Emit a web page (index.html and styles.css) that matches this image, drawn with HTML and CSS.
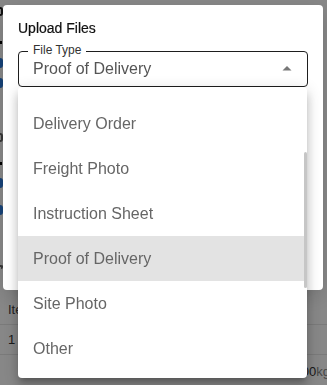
FILE: index.html
```html
<!DOCTYPE html>
<html lang="en">
<head>
    <meta charset="UTF-8">
    <meta name="viewport" content="width=device-width, initial-scale=1.0">
    <title>Upload Files</title>
    <link rel="stylesheet" href="styles.css">
</head>
<body>
    <!-- page behind the dialog -->
    <div class="page">
        <div class="side">
            <span class="side-bit s1"></span>
            <span class="side-dot d1"></span>
            <span class="side-check c1"></span>
            <span class="side-check c2"></span>
            <span class="side-bit s2"></span>
            <span class="side-dot d2"></span>
            <span class="side-check c3"></span>
            <span class="side-check c4"></span>
            <span class="side-bit s3"></span>
        </div>
        <div class="items-table">
            <div class="tr th">Item</div>
            <div class="tr">1 I</div>
            <div class="tr total">1,200<span class="unit">kg</span></div>
        </div>
    </div>

    <div class="backdrop"></div>

    <div class="dialog">
        <div class="dialog-title">Upload Files</div>
        <div class="field">
            <span class="field-label">File Type</span>
            <span class="field-value">Proof of Delivery</span>
            <svg class="field-arrow" width="24" height="24" viewBox="0 0 24 24">
                <path d="M7.5 13.5l4.5-4.5 4.5 4.5z" fill="#777"/>
            </svg>
        </div>
    </div>

    <div class="menu">
        <ul class="menu-list">
            <li class="menu-item">Delivery Order</li>
            <li class="menu-item">Freight Photo</li>
            <li class="menu-item">Instruction Sheet</li>
            <li class="menu-item selected">Proof of Delivery</li>
            <li class="menu-item">Site Photo</li>
            <li class="menu-item">Other</li>
        </ul>
        <div class="scroll-track">
            <div class="scroll-thumb"></div>
        </div>
    </div>
</body>
</html>
```

FILE: styles.css
```css
* {
    box-sizing: border-box;
}

html, body {
    margin: 0;
    height: 100%;
    overflow: hidden;
}

body {
    font-family: 'Liberation Sans', Arial, Helvetica, sans-serif;
    background: #fff;
    color: #222;
}

/* background page */
.page {
    display: flex;
    flex-direction: column;
    height: 385px;
}

.side {
    display: flex;
    flex-direction: column;
    height: 295px;
}

.side-bit {
    width: 3px;
    height: 9px;
    border: 2px solid #222;
    border-left: none;
    border-radius: 0 3px 3px 0;
}

.s1 { margin-top: 7px; }
.s2 { margin-top: 45px; border-color: #666; }
.s3 { margin-top: 50px; border-color: #666; height: 4px; border-bottom: none; }

.side-dot {
    width: 2px;
    height: 3px;
    background: #000;
}

.d1 { margin-top: 25px; }
.d2 { margin-top: 20px; }

.side-check {
    width: 3px;
    height: 10px;
    background: #2a7de1;
    border-radius: 0 3px 3px 0;
}

.c1 { margin-top: 14px; }
.c2 { margin-top: 10px; }
.c3 { margin-top: 13px; }
.c4 { margin-top: 17px; }

.items-table {
    display: flex;
    flex-direction: column;
    font-size: 13px;
    color: #333;
}

.tr {
    height: 30px;
    padding: 0 8px;
    display: flex;
    align-items: center;
    border-bottom: 1px solid #e6e6e6;
}

.th {
    color: #444;
}

.total {
    justify-content: flex-end;
    border-bottom: none;
    margin-right: -11px;
    padding-top: 2px;
}

.unit {
    color: #888;
}

.backdrop {
    position: fixed;
    inset: 0;
    background: rgba(0, 0, 0, 0.47);
}

/* dialog */
.dialog {
    position: fixed;
    left: 3px;
    top: 5px;
    width: 320px;
    height: 285px;
    background: #fff;
    border-radius: 4px;
    padding: 13px 15px 0 15px;
    box-shadow: 0 6px 20px rgba(0, 0, 0, 0.15);
}

.dialog-title {
    font-size: 14px;
    line-height: 20px;
    font-weight: 500;
    color: #111;
    margin-bottom: 13px;
    -webkit-text-stroke: 0.2px #111;
}

.field {
    position: relative;
    display: flex;
    align-items: center;
    width: 290px;
    height: 36px;
    border: 1px solid #1e1e1e;
    border-radius: 4px;
    padding: 0 8px 0 14px;
}

.field-label {
    position: absolute;
    left: 9px;
    top: -9px;
    padding: 0 5px;
    background: #fff;
    font-size: 12px;
    line-height: 14px;
    color: #333;
}

.field-value {
    font-size: 16px;
    line-height: 20px;
    color: #555;
}

.field-arrow {
    margin-left: auto;
}

/* dropdown menu */
.menu {
    position: fixed;
    left: 18px;
    top: 87px;
    width: 289px;
    height: 291px;
    background: #fff;
    border-radius: 4px;
    display: flex;
    overflow: hidden;
    box-shadow: 0 5px 5px -3px rgba(0,0,0,0.2),
                0 8px 10px 1px rgba(0,0,0,0.14),
                0 3px 14px 2px rgba(0,0,0,0.12);
}

.menu-list {
    flex: 1;
    list-style: none;
    margin: 0;
    padding: 14px 0 0 0;
}

.menu-item {
    height: 45px;
    display: flex;
    align-items: center;
    padding-left: 15px;
    font-size: 16px;
    color: #666;
}

.menu-item.selected {
    background: #e3e3e3;
}

.scroll-track {
    width: 3px;
}

.scroll-thumb {
    margin-top: 65px;
    height: 136px;
    background: #c6c6c6;
    border-radius: 2px;
}
```
